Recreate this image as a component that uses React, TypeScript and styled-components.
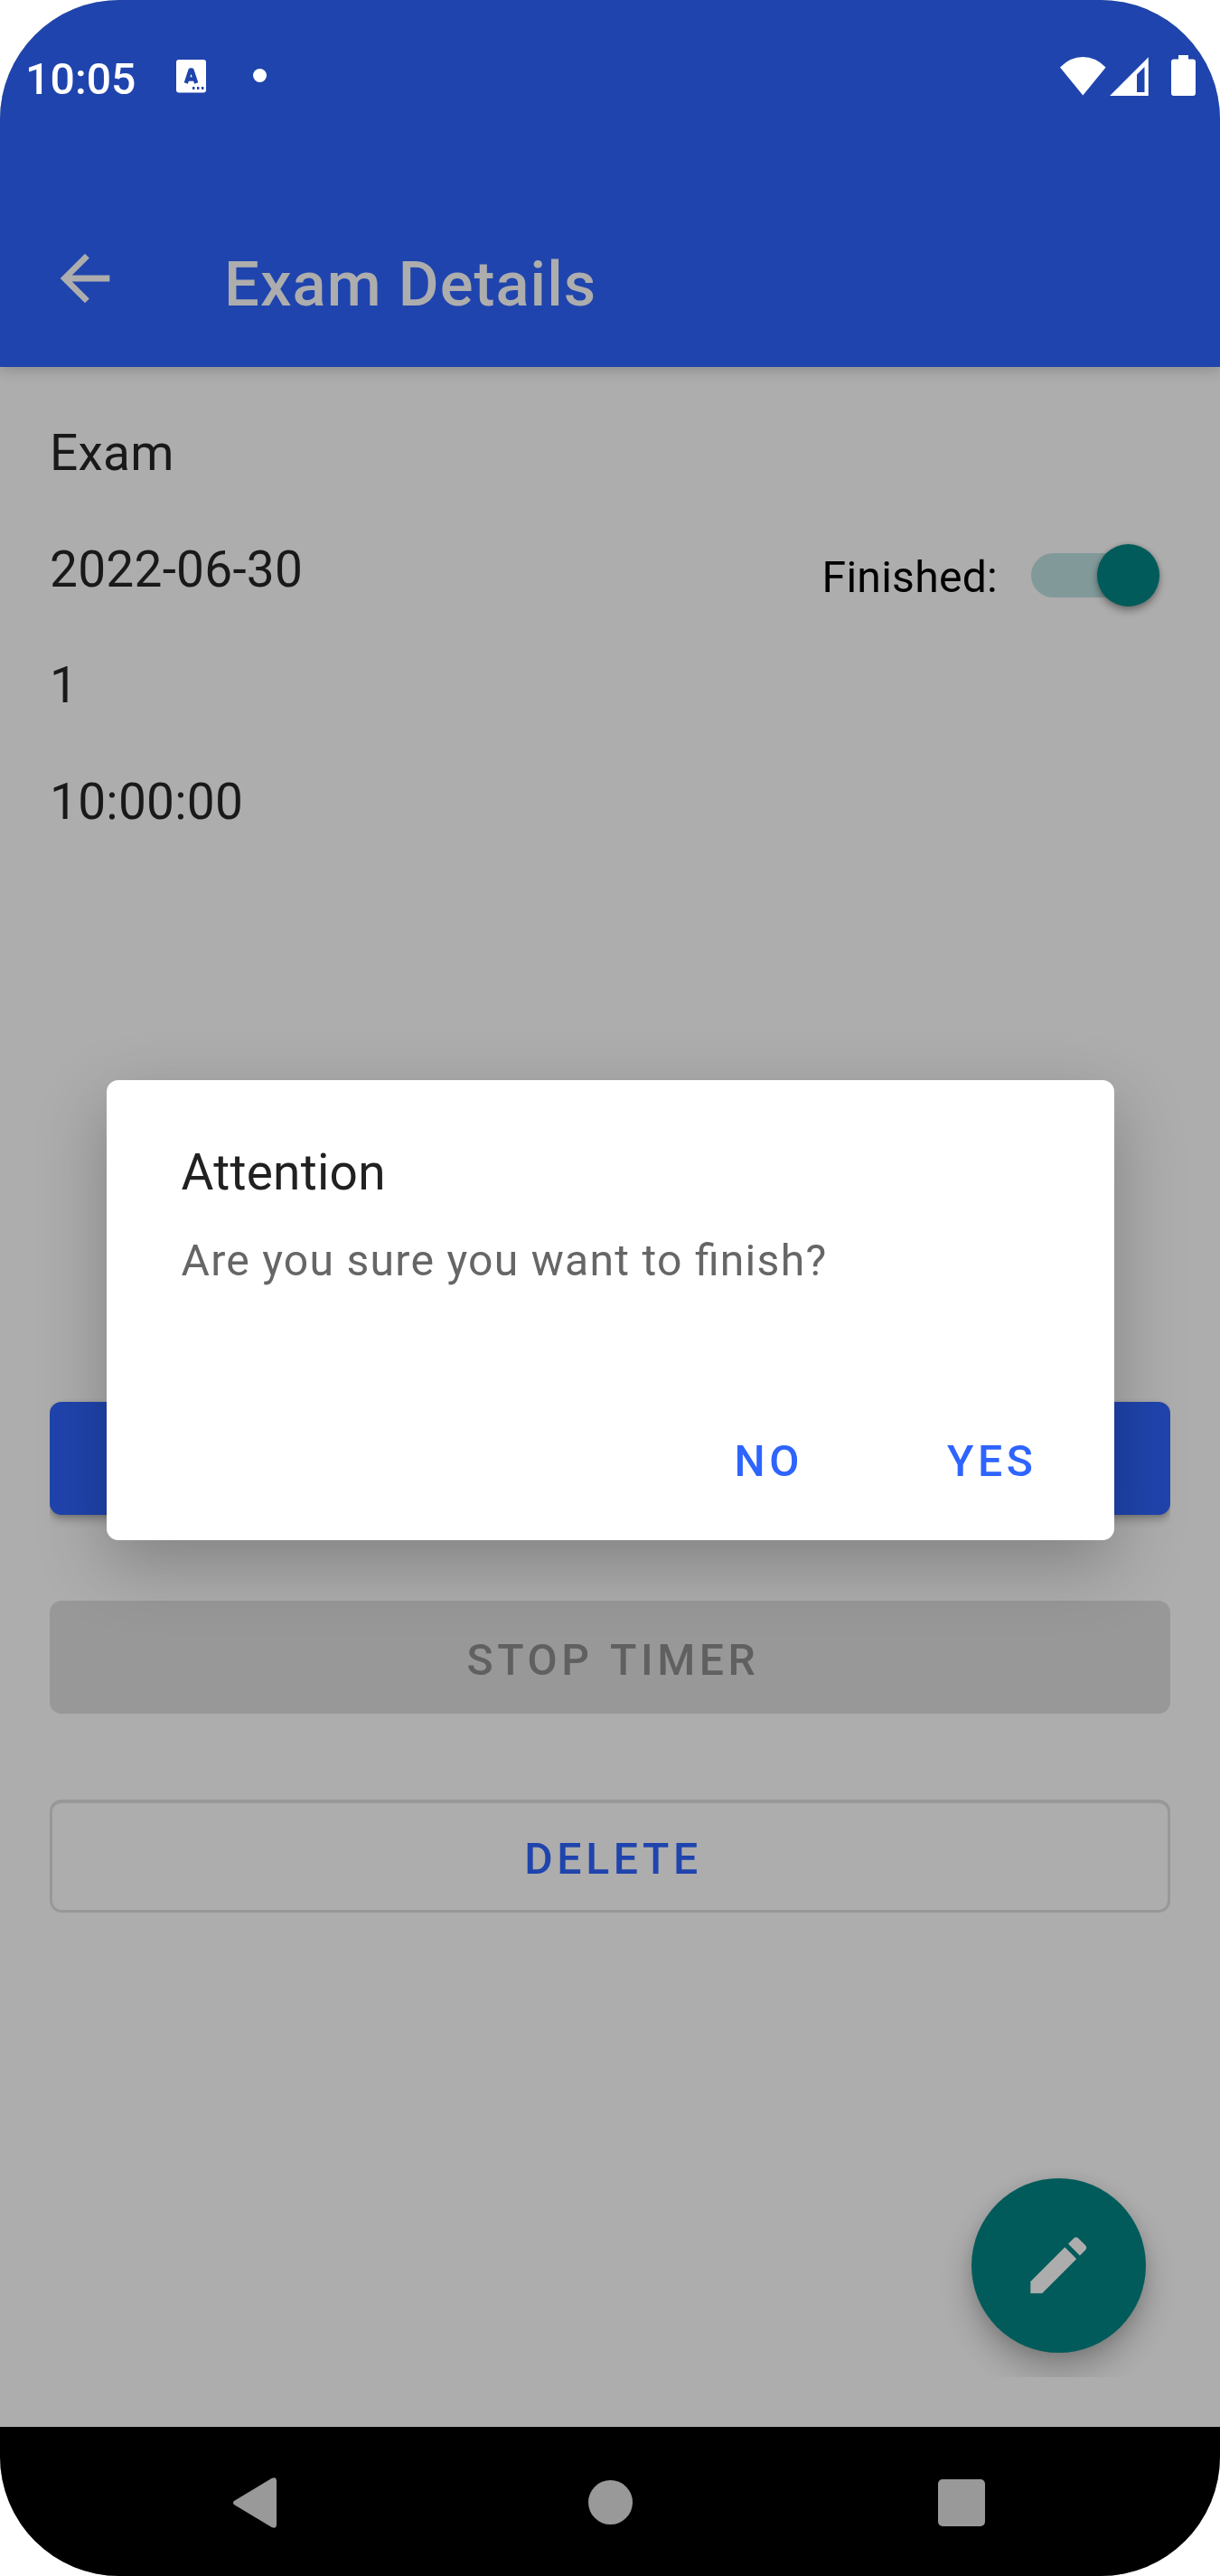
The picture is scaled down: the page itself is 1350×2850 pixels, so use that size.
import React from "react";
import styled, { createGlobalStyle, css } from "styled-components";

const GlobalStyle = createGlobalStyle`
  *, *::before, *::after { box-sizing: border-box; }
  body { margin: 0; background: #fff; }
  button { font: inherit; border: 0; background: none; padding: 0; margin: 0; }
`;

const color = {
  primary: "#2e64ff",
  primaryDim: "#1f44ad",
  surfaceDim: "#adadad",
  teal: "#025b5b",
  disabled: "#989898",
};

const Phone = styled.div`
  position: relative;
  display: flex;
  flex-direction: column;
  width: 1350px;
  height: 2850px;
  overflow: hidden;
  border-radius: 132px;
  background: ${color.surfaceDim};
  font-family: Roboto, "Liberation Sans", sans-serif;
`;

const Header = styled.header`
  display: flex;
  flex-direction: column;
  flex: none;
  height: 406px;
  background: ${color.primaryDim};
  box-shadow: 0 4px 14px rgba(0, 0, 0, 0.18);
`;

const StatusBar = styled.div`
  display: flex;
  align-items: flex-start;
  height: 213px;
  padding: 60px 27px 0 28px;
  color: #fff;
`;

const Clock = styled.span`
  width: 167px;
  font-size: 48.125px;
  font-weight: 500;
  line-height: 56px;
  letter-spacing: 0.1px;
`;

const KeyboardIcon = styled.svg`
  width: 33px;
  height: 37px;
  margin-top: 6px;
`;

const Dot = styled.span`
  width: 15px;
  height: 15px;
  margin: 16px 0 0 52px;
  border-radius: 50%;
  background: #fff;
`;

const SystemIcons = styled.svg`
  width: 150px;
  height: 46px;
  margin-left: auto;
`;

const Toolbar = styled.div`
  display: flex;
  align-items: center;
  height: 193px;
  padding: 0 53px;
`;

const BackButton = styled.button`
  width: 82px;
  height: 82px;
  margin-bottom: 4px;
  svg { display: block; width: 82px; height: 82px; }
`;

const Title = styled.h1`
  margin: 10px 0 0 113px;
  color: ${color.surfaceDim};
  font-size: 68.75px;
  font-weight: 500;
  line-height: 80px;
  letter-spacing: 1.05px;
  white-space: nowrap;
`;

const Details = styled.section`
  display: flex;
  justify-content: space-between;
  height: 1145px;
  padding: 31px 67px 0 55px;
`;

const Field = styled.p`
  margin: 0;
  color: #191919;
  font-size: 55px;
  line-height: 128.7px;
  letter-spacing: 0.25px;
`;

const SwitchRow = styled.label`
  display: flex;
  align-items: center;
  height: 70px;
  margin-top: 164px;
  color: #000;
  font-size: 48.125px;
  line-height: 56px;
  letter-spacing: 0.25px;
`;

const SwitchLabel = styled.span`
  padding-top: 5px;
`;

const SwitchTrack = styled.span`
  display: flex;
  align-items: center;
  justify-content: flex-end;
  width: 142px;
  height: 49px;
  margin-left: 37px;
  border-radius: 25px;
  background: #819999;
`;

const SwitchThumb = styled.span`
  width: 69px;
  height: 69px;
  border-radius: 50%;
  background: ${color.teal};
  box-shadow: 0 5px 8px rgba(0, 0, 0, 0.32), 0 0 4px rgba(0, 0, 0, 0.2);
`;

const Actions = styled.section`
  display: flex;
  flex-direction: column;
  gap: 95px;
  padding: 0 55px;
`;

const ActionButton = styled.button<{ $kind: "filled" | "disabled" | "outlined" }>`
  display: flex;
  align-items: center;
  justify-content: center;
  height: 125px;
  padding: 5px 0 0 7px;
  border-radius: 13px;
  font-size: 48.125px;
  font-weight: 500;
  letter-spacing: 4.6px;
  word-spacing: 3px;
  ${(p) => p.$kind === "filled" && css`
    background: ${color.primaryDim};
    box-shadow: 0 6px 8px rgba(0, 0, 0, 0.22), 0 1px 4px rgba(0, 0, 0, 0.15);
    clip-path: inset(-10px 0 -20px 0);
  `}
  ${(p) => p.$kind === "disabled" && css`
    background: ${color.disabled};
    color: #606060;
  `}
  ${(p) => p.$kind === "outlined" && css`
    border: 3px solid #989898;
    border-top-width: 4px;
    color: ${color.primaryDim};
  `}
`;

const FabArea = styled.div`
  position: absolute;
  right: 0;
  bottom: 220px;
  width: 350px;
  height: 300px;
  padding: 80px 0 0 75px;
  overflow: hidden;
`;

const Fab = styled.button`
  display: flex;
  align-items: center;
  justify-content: center;
  width: 193px;
  height: 193px;
  border-radius: 50%;
  background: ${color.teal};
  box-shadow: 0 20px 34px rgba(0, 0, 0, 0.24), 0 2px 14px rgba(0, 0, 0, 0.1);
  svg { width: 82.5px; height: 82.5px; }
`;

const NavBar = styled.nav`
  display: flex;
  align-items: center;
  height: 165px;
  margin-top: auto;
  padding: 2px 260px 0 258px;
  justify-content: space-between;
  background: #000;
  svg { display: block; fill: #999; }
`;

const HomeIcon = styled.svg`
  width: 49px;
  height: 49px;
  margin-left: 6px;
`;

const DialogLayer = styled.div`
  position: absolute;
  inset: 0;
  display: flex;
  align-items: flex-start;
  justify-content: center;
  padding-top: 1195px;
`;

const Dialog = styled.div`
  display: flex;
  flex-direction: column;
  width: 1115px;
  height: 509px;
  padding: 70px 66px 0 83px;
  border-radius: 13px;
  background: #fff;
  box-shadow: 0 26px 76px rgba(0, 0, 0, 0.25);
`;

const DialogTitle = styled.h2`
  margin: 0;
  color: #212121;
  font-size: 55px;
  font-weight: 400;
  line-height: 64px;
  letter-spacing: 0.25px;
`;

const DialogText = styled.p`
  margin: 38px 0 0;
  color: #666;
  font-size: 48.125px;
  line-height: 56px;
  letter-spacing: 1.25px;
  font-feature-settings: "liga" 1;
`;

const DialogActions = styled.div`
  display: flex;
  justify-content: flex-end;
  gap: 159px;
  margin: 166px 19px 0 0;
`;

const DialogButton = styled.button`
  color: ${color.primary};
  font-size: 48.125px;
  font-weight: 500;
  line-height: 56px;
  letter-spacing: 4.6px;
`;

const fields = ["Exam", "2022-06-30", "1", "10:00:00"];

export default function App() {
  return (
    <>
      <GlobalStyle />
      <Phone>
        <Header>
          <StatusBar>
            <Clock>10:05</Clock>
            <KeyboardIcon viewBox="0 0 33 37">
              <rect width="33" height="36.5" rx="3" fill="#fff" />
              <path d="M10.800 26 15.600 11.500h1.800L22.200 26M12.800 21.500h7.400" fill="none" stroke={color.primaryDim} strokeWidth="4.400" strokeLinejoin="round" />
              <path d="M18 30h2.400v3H18zM23 30h2.400v3H23zM28 30h2.400v3H28z" fill={color.primaryDim} />
            </KeyboardIcon>
            <Dot />
            <SystemIcons viewBox="0 0 150 46" fill="#fff">
              <path d="M0 14.500Q11 3 25.300 3T50.600 14.500L25.300 45.500Z" />
              <path fillRule="evenodd" d="M55 46 97.800 3.300V46ZM85 42h8.500V14L85 22.500Z" />
              <path d="M131 1h11v4.500h5q3 0 3 3V43q0 3-3 3h-21q-3 0-3-3V8.500q0-3 3-3h5Z" />
            </SystemIcons>
          </StatusBar>
          <Toolbar>
            <BackButton aria-label="Back">
              <svg viewBox="0 0 24 24" fill={color.surfaceDim}>
                <path d="M20 11H7.830l5.590-5.590L12 4l-8 8 8 8 1.410-1.410L7.830 13H20v-2z" />
              </svg>
            </BackButton>
            <Title>Exam Details</Title>
          </Toolbar>
        </Header>

        <Details>
          <div>
            {fields.map((f) => (
              <Field key={f}>{f}</Field>
            ))}
          </div>
          <SwitchRow>
            <SwitchLabel>Finished:</SwitchLabel>
            <SwitchTrack>
              <SwitchThumb />
            </SwitchTrack>
          </SwitchRow>
        </Details>

        <Actions>
          <ActionButton $kind="filled" aria-label="Timer" />
          <ActionButton $kind="disabled">STOP TIMER</ActionButton>
          <ActionButton $kind="outlined">DELETE</ActionButton>
        </Actions>

        <FabArea>
          <Fab aria-label="Edit">
            <svg viewBox="0 0 24 24" fill={color.surfaceDim}>
              <path d="M3 17.250V21h3.750L17.810 9.940l-3.750-3.750L3 17.250zM20.710 7.040c.390-.390.390-1.020 0-1.410l-2.340-2.340c-.390-.390-1.020-.390-1.410 0l-1.830 1.830 3.750 3.750 1.830-1.830z" />
            </svg>
          </Fab>
        </FabArea>

        <NavBar>
          <svg width="48" height="56" viewBox="0 0 48 56">
            <path d="M1 26 42.500 1Q48-1.500 48 4V52Q48 57.500 42.500 55L1 30Q-1 28 1 26Z" />
          </svg>
          <HomeIcon viewBox="0 0 49 49">
            <circle cx="24.500" cy="24.500" r="24.500" />
          </HomeIcon>
          <svg width="52" height="52" viewBox="0 0 52 52">
            <rect width="52" height="52" rx="5" />
          </svg>
        </NavBar>

        <DialogLayer>
          <Dialog role="dialog">
            <DialogTitle>Attention</DialogTitle>
            <DialogText>Are you sure you want to finish?</DialogText>
            <DialogActions>
              <DialogButton>NO</DialogButton>
              <DialogButton>YES</DialogButton>
            </DialogActions>
          </Dialog>
        </DialogLayer>
      </Phone>
    </>
  );
}
